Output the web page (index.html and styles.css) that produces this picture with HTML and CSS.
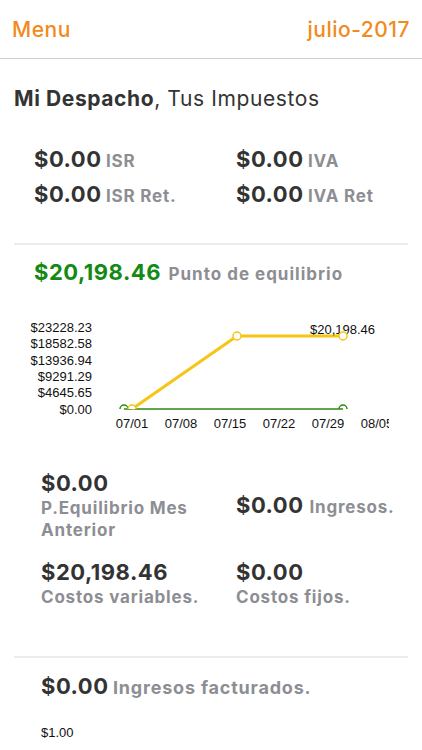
FILE: index.html
```html
<!DOCTYPE html>
<html lang="es">
	<head>
		<meta charset="UTF-8" />
		<meta name="viewport" content="width=device-width, initial-scale=1.0" />
		<title>Mi Despacho</title>
		<link rel="stylesheet" href="styles.css">
	</head>
	<body>
		<header class="top-bar">
			<span class="top-link">Menu</span>
			<span class="top-link">julio-2017</span>
		</header>

		<h1 class="title"><b>Mi Despacho</b>, Tus Impuestos</h1>

		<section class="tax-grid">
			<div class="pair"><span class="amount">$0.00</span> <span class="label">ISR</span></div>
			<div class="pair"><span class="amount">$0.00</span> <span class="label">IVA</span></div>
			<div class="pair"><span class="amount">$0.00</span> <span class="label">ISR Ret.</span></div>
			<div class="pair"><span class="amount">$0.00</span> <span class="label">IVA Ret</span></div>
		</section>

		<hr class="sep" />

		<div class="pair balance">
			<span class="amount green">$20,198.46</span> <span class="label">Punto de equilibrio</span>
		</div>

		<!-- grafica de punto de equilibrio -->
		<svg class="chart" viewBox="0 0 422 120">
			<defs>
				<clipPath id="plot-clip">
					<rect x="0" y="0" width="389" height="120" />
				</clipPath>
			</defs>
			<g class="y-axis" text-anchor="end">
				<text x="92" y="16">$23228.23</text>
				<text x="92" y="32">$18582.58</text>
				<text x="92" y="49">$13936.94</text>
				<text x="92" y="65">$9291.29</text>
				<text x="92" y="81">$4645.65</text>
				<text x="92" y="98">$0.00</text>
			</g>
			<line x1="124" y1="93" x2="343" y2="93" class="line-green" />
			<path d="M120 93 a4 4 0 0 1 8 0" class="dot-green" />
			<path d="M339 93 a4 4 0 0 1 8 0" class="dot-green" />
			<polyline points="132,93 237,20 343,20" class="line-yellow" />
			<path d="M128 93 a4 4 0 0 1 8 0" class="dot-yellow" />
			<circle cx="237" cy="20" r="4" class="dot-yellow" />
			<text x="310" y="18" class="point-label">$20,198.46</text>
			<circle cx="343" cy="20" r="4" class="dot-yellow" />
			<g class="x-axis" text-anchor="middle" clip-path="url(#plot-clip)">
				<text x="132" y="112">07/01</text>
				<text x="181" y="112">07/08</text>
				<text x="230" y="112">07/15</text>
				<text x="279" y="112">07/22</text>
				<text x="328" y="112">07/29</text>
				<text x="377" y="112">08/05</text>
			</g>
		</svg>

		<section class="stats">
			<div class="stat">
				<div class="amount">$0.00</div>
				<div class="label narrow">P.Equilibrio Mes Anterior</div>
			</div>
			<div class="stat inline">
				<span class="amount">$0.00</span> <span class="label">Ingresos.</span>
			</div>
			<div class="stat">
				<div class="amount">$20,198.46</div>
				<div class="label">Costos variables.</div>
			</div>
			<div class="stat">
				<div class="amount">$0.00</div>
				<div class="label">Costos fijos.</div>
			</div>
		</section>

		<hr class="sep sep-low" />

		<div class="pair billed">
			<span class="amount">$0.00</span> <span class="label big">Ingresos facturados.</span>
		</div>

		<div class="small-value">$1.00</div>
	</body>
</html>
```

FILE: styles.css
```css
body {
	margin: 0;
	font-family: Inter, "Liberation Sans", sans-serif;
	color: #333;
	background: #fff;
}
.top-bar {
	display: flex;
	justify-content: space-between;
	align-items: center;
	height: 58px;
	padding: 0 12px 0 12px;
	border-bottom: 1px solid #cfcfcf;
}
.top-link {
	color: #f28a1c;
	font-size: 21px;
	font-weight: 500;
	letter-spacing: 0.5px;
}
.title {
	margin: 0;
	padding: 28px 14px 0;
	font-size: 21px;
	font-weight: 400;
	line-height: 24px;
	letter-spacing: 0.6px;
}
.title b {
	font-weight: 700;
}
.tax-grid {
	display: grid;
	grid-template-columns: 202px 1fr;
	row-gap: 7px;
	padding: 35px 0 0 34px;
}
.pair {
	white-space: nowrap;
	line-height: 26px;
}
.amount {
	font-size: 22px;
	font-weight: 700;
	letter-spacing: 0.5px;
	color: #333;
}
.label {
	font-size: 17px;
	font-weight: 700;
	letter-spacing: 0.8px;
	color: #8d8e93;
}
.label.big {
	font-size: 18px;
}
.green {
	color: #138a13;
}
.balance .label {
	margin-left: 3px;
	letter-spacing: 1px;
}
.sep {
	margin: 34px 14px 0;
	border: 0;
	height: 2px;
	background: #ececec;
}
.sep-low {
	margin-top: 48px;
}
.balance {
	padding: 14px 0 0 34px;
}
.chart {
	display: block;
	width: 100%;
	height: 120px;
	margin-top: 29px;
	font-family: "Liberation Sans", Arial, sans-serif;
	font-size: 13px;
	fill: #111;
}
.line-green {
	stroke: #2f8a12;
	stroke-width: 1.5;
}
.dot-green {
	fill: none;
	stroke: #2f8a12;
	stroke-width: 1.5;
}
.line-yellow {
	fill: none;
	stroke: #f6c515;
	stroke-width: 3;
	stroke-linejoin: round;
}
.dot-yellow {
	fill: #fff;
	stroke: #f6c515;
	stroke-width: 1.5;
}
.point-label {
	font-size: 13px;
}
.x-axis {
	font-size: 13px;
}
.stats {
	display: grid;
	grid-template-columns: 195px 1fr;
	row-gap: 17px;
	padding: 33px 0 0 41px;
}
.stat .amount {
	display: block;
	line-height: 28px;
}
.stat .label {
	line-height: 22px;
}
.stat .narrow {
	max-width: 170px;
}
.stat.inline {
	display: flex;
	align-items: baseline;
	gap: 6px;
	align-self: center;
	white-space: nowrap;
}
.billed {
	padding: 15px 0 0 41px;
}
.small-value {
	padding: 24px 0 0 41px;
	font-family: "Liberation Sans", Arial, sans-serif;
	font-size: 13px;
	color: #111;
}
```
